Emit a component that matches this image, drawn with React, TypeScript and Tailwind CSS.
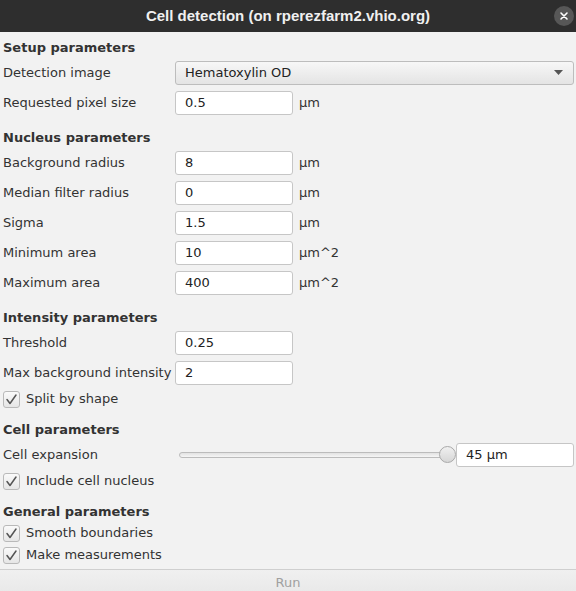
import React from "react";

const font = { fontFamily: '"DejaVu Sans", "Liberation Sans", sans-serif' };

function Heading({ children, className = "" }: { children: React.ReactNode; className?: string }) {
  return (
    <div className={`flex h-[22px] items-center pl-[3px] text-[13px] font-bold text-[#333333] ${className}`}>{children}</div>
  );
}

function Field({ label, value, unit, className = "mt-[6px]" }: { label: string; value: string; unit?: string; className?: string }) {
  return (
    <div className={`flex h-[24px] items-center ${className}`}>
      <span className="w-[175px] pl-[3px] text-[13px] text-[#333333]">{label}</span>
      <div className="flex h-[24px] w-[118px] items-center rounded-[3px] border border-[#c6c6c6] bg-white pl-[9px] text-[13px] text-[#222222]">
        {value}
      </div>
      {unit ? <span className="ml-[6px] text-[13px] text-[#333333]">{unit}</span> : null}
    </div>
  );
}

function Check({ label, className = "" }: { label: string; className?: string }) {
  return (
    <div className={`flex h-[20px] items-center pl-[3px] ${className}`}>
      <div className="grid h-[17px] w-[17px] place-items-center rounded-[3px] border border-[#b9b9b9] bg-gradient-to-b from-[#fafafa] to-[#e6e6e6]">
        <svg width="13" height="13" viewBox="0 0 13 13" fill="none">
          <path d="M2 6.5 L5 10.5 L11 2" stroke="#555555" strokeWidth="1.5" strokeLinecap="round" strokeLinejoin="round" />
        </svg>
      </div>
      <span className="ml-[6px] text-[13px] text-[#333333]">{label}</span>
    </div>
  );
}

export default function App() {
  return (
    <div style={font} className="h-[591px] w-[576px] overflow-hidden bg-[#f2f2f2]">
      <div className="relative flex h-[32px] items-center justify-center bg-[#2e2e2e]">
        <span className="font-['Liberation_Sans',sans-serif] text-[15px] font-bold text-[#f0f0f0]">
          Cell detection (on rperezfarm2.vhio.org)
        </span>
        <div className="absolute right-[2px] top-[6px] grid h-[20px] w-[20px] place-items-center rounded-full bg-[#575757]">
          <svg width="10" height="10" viewBox="0 0 10 10">
            <path d="M2 2 L8 8 M8 2 L2 8" stroke="#ffffff" strokeWidth="1.6" strokeLinecap="round" />
          </svg>
        </div>
      </div>

      <Heading className="mt-[5px]">Setup parameters</Heading>
      <div className="mt-[2px] flex h-[24px] items-center">
        <span className="w-[175px] pl-[3px] text-[13px] text-[#333333]">Detection image</span>
        <div className="flex h-[24px] w-[399px] items-center justify-between rounded-[3px] border border-[#bdbdbd] bg-gradient-to-b from-[#f7f7f7] to-[#e4e4e4] pl-[9px] pr-[10px] text-[13px] text-[#222222]">
          <span>Hematoxylin OD</span>
          <svg width="9" height="6" viewBox="0 0 9 6">
            <path d="M0 0 L9 0 L4.5 5 Z" fill="#555555" />
          </svg>
        </div>
      </div>
      <Field label="Requested pixel size" value="0.5" unit="µm" />

      <Heading className="mt-[12px]">Nucleus parameters</Heading>
      <Field label="Background radius" value="8" unit="µm" className="mt-[2px]" />
      <Field label="Median filter radius" value="0" unit="µm" />
      <Field label="Sigma" value="1.5" unit="µm" />
      <Field label="Minimum area" value="10" unit="µm^2" />
      <Field label="Maximum area" value="400" unit="µm^2" />

      <Heading className="mt-[12px]">Intensity parameters</Heading>
      <Field label="Threshold" value="0.25" className="mt-[2px]" />
      <Field label="Max background intensity" value="2" />
      <Check label="Split by shape" className="mt-[4px]" />

      <Heading className="mt-[10px]">Cell parameters</Heading>
      <div className="mt-[2px] flex h-[24px] items-center">
        <span className="w-[179px] pl-[3px] text-[13px] text-[#333333]">Cell expansion</span>
        <div className="relative flex h-[24px] w-[277px] items-center">
          <div className="h-[6px] w-[268px] rounded-full border border-[#bcbcbc] bg-gradient-to-b from-[#e2e2e2] to-[#f6f6f6]" />
          <div className="absolute left-[260px] top-[3px] h-[17px] w-[17px] rounded-full border border-[#a9a9a9] bg-gradient-to-b from-[#f0f0f0] to-[#d6d6d6]" />
        </div>
        <div className="flex h-[24px] w-[118px] items-center rounded-[3px] border border-[#c6c6c6] bg-white pl-[9px] text-[13px] text-[#222222]">
          45 µm
        </div>
      </div>
      <Check label="Include cell nucleus" className="mt-[4px]" />

      <Heading className="mt-[10px]">General parameters</Heading>
      <Check label="Smooth boundaries" />
      <Check label="Make measurements" className="mt-[2px]" />

      <div className="mt-[4px] flex h-[26px] items-center justify-center border-t border-[#cfcfcf] bg-gradient-to-b from-[#f0f0f0] to-[#e8e8e8] text-[13px] text-[#a0a0a0]">
        Run
      </div>
    </div>
  );
}
